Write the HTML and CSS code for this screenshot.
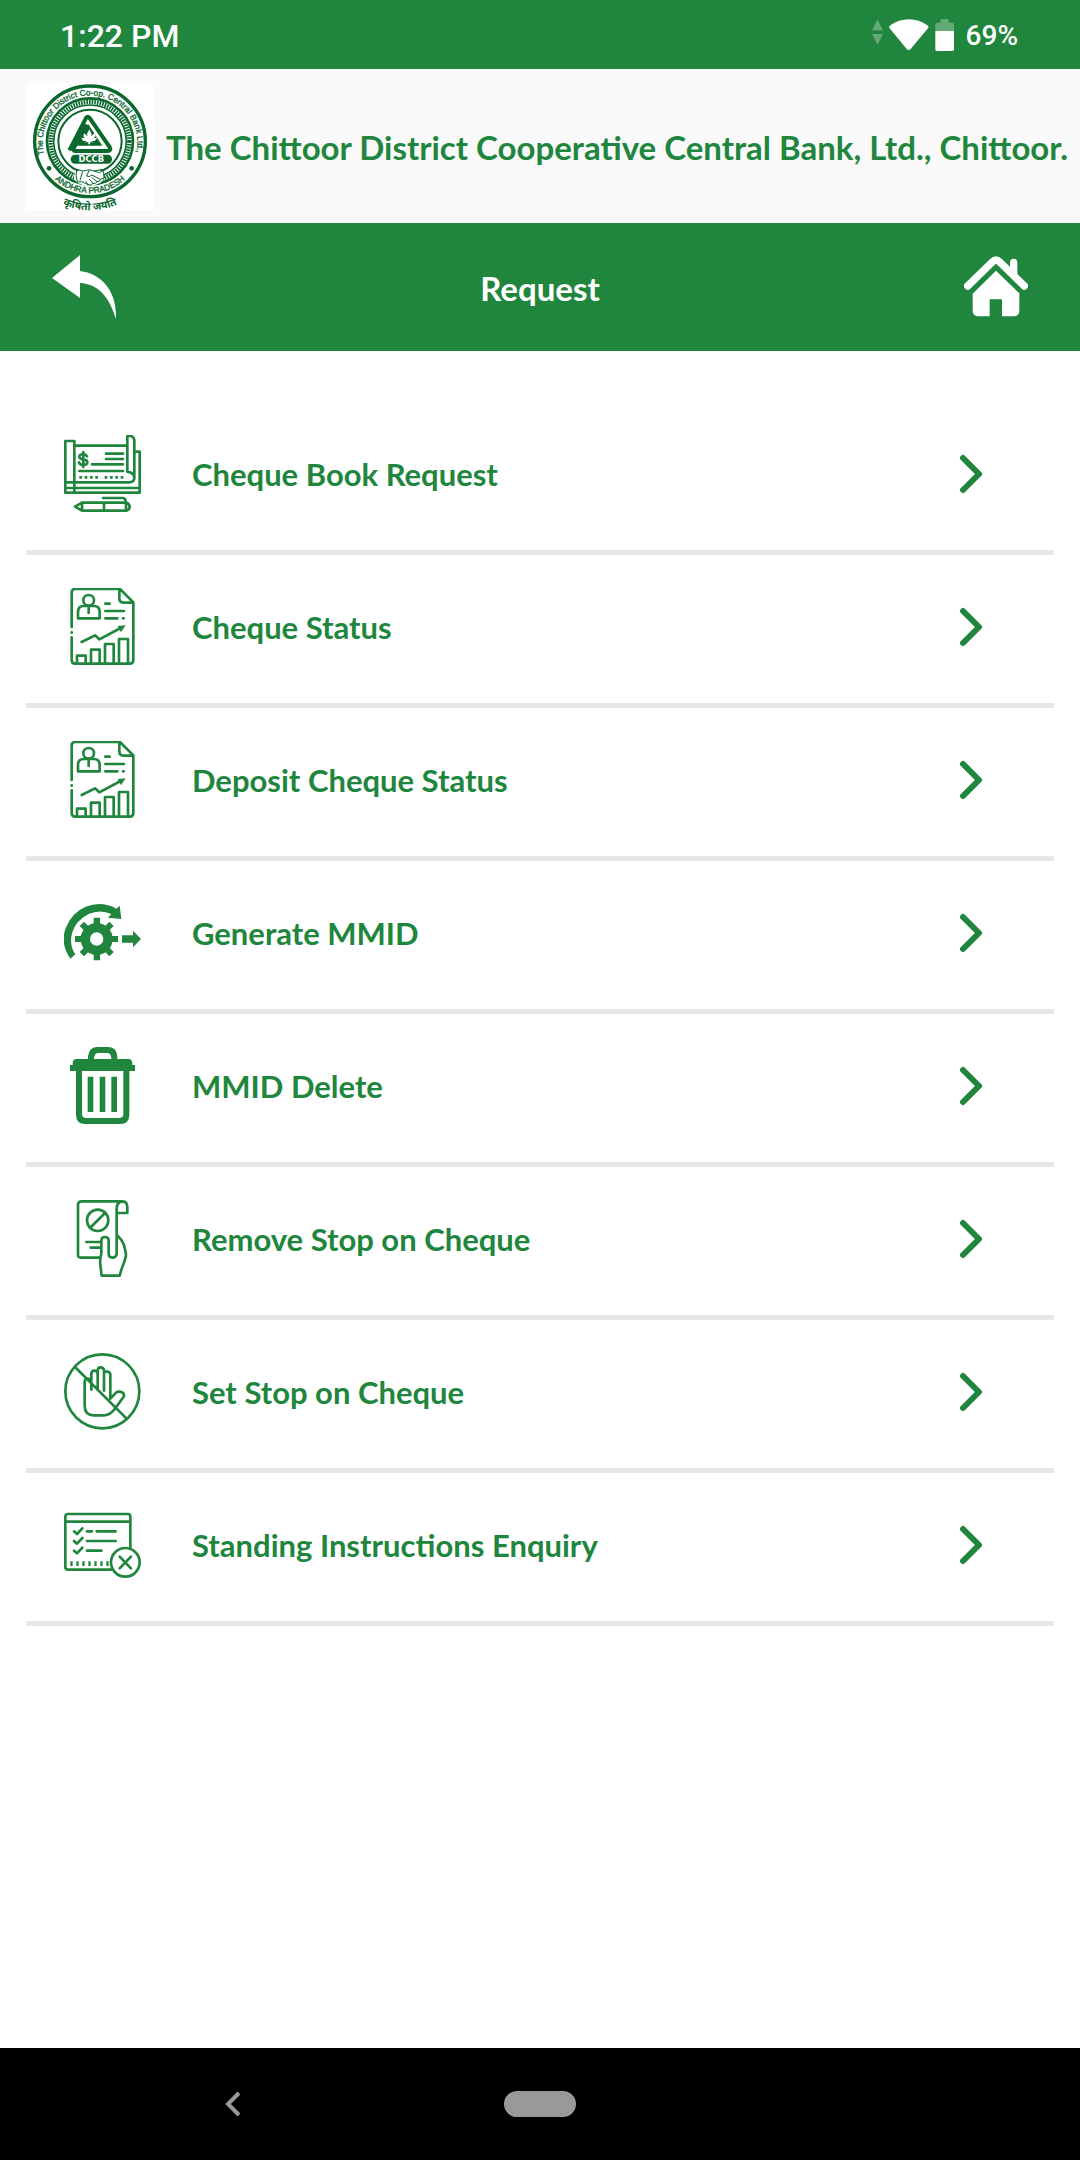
FILE: index.html
```html
<!DOCTYPE html>
<html lang="en">
<head>
<meta charset="utf-8">
<meta name="viewport" content="width=device-width, initial-scale=1">
<title>Request</title>
<link rel="stylesheet" href="styles.css">
</head>
<body>
<div class="status-bar">
  <span class="clock">1:22 PM</span>
  <div class="status-icons">
    <svg class="signal" viewBox="93 54 34 96" aria-hidden="true"><path d="M93 87 110 54 127 87ZM93 99H127L110 132Z"/></svg>
    <svg class="wifi" viewBox="145 54 120 96" aria-hidden="true"><path d="M147 74Q205 36 262 74Q265 78 262 82L210 144Q204 150 198 144L147 82Q144 78 147 74Z"/></svg>
    <svg class="battery" viewBox="285 54 57 96" aria-hidden="true"><path class="faded" d="M286 90V69Q286 65 290 65H301V58Q301 54 305 54H322Q326 54 326 58V65H337Q342 65 342 69V90Z"/><path d="M286 90H342V145Q342 150 337 150H291Q286 150 286 145Z"/></svg>
    <span class="charge">69%</span>
  </div>
</div>

<header class="brand">
  <svg class="logo" viewBox="78 66 381 381" role="img" aria-label="DCCB Andhra Pradesh">
    <defs>
      <path id="arc-top" d="M136 292A142 142 0 1 1 406 286"/>
      <path id="arc-bottom" d="M150 340A156 156 0 0 0 390 340"/>
      <path id="arc-motto" d="M150 409A205 205 0 0 0 390 409"/>
    </defs>
    <rect x="78" y="66" width="381" height="381" fill="#fff"/>
    <g fill="none" stroke="#0b682d">
      <circle cx="270" cy="241" r="166" stroke-width="10"/>
      <circle cx="270" cy="241" r="129" stroke-width="8"/>
      <circle cx="270" cy="241" r="118" stroke-width="13" stroke-dasharray="5 3"/>
      <circle cx="270" cy="241" r="109" stroke-width="5"/>
      <circle cx="270" cy="241" r="95" stroke-width="6"/>
      <path d="M208 268 258 171Q263 164 269 171L329 258Q335 270 322 270H226Q217 270 223 258L260 190" stroke-width="12"/>
    </g>
    <g fill="#0b682d">
      <circle cx="147" cy="322" r="7"/>
      <circle cx="395" cy="322" r="7"/>
      <path d="M265 190 307 254H228Z"/>
      <rect x="212" y="281" width="124" height="27" rx="13"/>
    </g>
    <path fill="#fff" d="M268 205 275 220 273 226 284 217 287 226 281 231 292 230 285 239 273 241 282 244H270V250H265V244H253L262 240 249 239 244 230 255 232 250 226 252 217 263 226 261 218Z"/>
    <ellipse cx="267" cy="348" rx="45" ry="26" fill="#fff"/>
    <g fill="none" stroke="#0b682d" stroke-width="3">
      <path d="M230 325Q226 345 232 363L246 362 264 371Q272 374 279 367 289 369 291 362 300 363 303 354L312 351Q313 334 306 325L282 330 268 326 249 330ZM248 331 240 358M268 327 260 345Q267 350 276 342L302 356M264 371 257 361M279 367 267 354M291 362 276 350M282 330 302 336"/>
    </g>
    <text class="dccb" x="274" y="303" text-anchor="middle">DCCB</text>
    <text class="ring-text"><textPath href="#arc-top" startOffset="50%" text-anchor="middle">The Chittoor District Co-op. Central Bank Ltd.,</textPath></text>
    <text class="ring-text"><textPath href="#arc-bottom" startOffset="50%" text-anchor="middle">ANDHRA PRADESH</textPath></text>
    <text class="motto"><textPath href="#arc-motto" startOffset="50%" text-anchor="middle">कृषितो जयति</textPath></text>
  </svg>
  <h1 class="bank-name">The Chittoor District Cooperative Central Bank, Ltd., Chittoor.</h1>
</header>

<div class="toolbar">
  <button class="tool-button" type="button" aria-label="Back">
    <svg viewBox="0 0 64 64"><path d="M0 23 28 0V16C50 19 65 36 64 64 57 41 46 29 28 28V43Z"/></svg>
  </button>
  <h2 class="page-title">Request</h2>
  <button class="tool-button" type="button" aria-label="Home">
    <svg viewBox="372 767 192 192"><path d="M398 883 468 814 538 882V933Q538 951 520 951H486V900H449V951H416Q398 951 398 933Z"/><path d="M510 806V790Q510 778 521 778T532 790V828Z"/><path class="roof" d="M383 860 458 787Q468 777 478 787L553 860"/></svg>
  </button>
</div>

<main class="content">
  <ul class="menu">
    <li><a class="menu-row" href="#cheque-book">
      <svg class="icon" viewBox="72 75 231 231"><path class="line" d="M76 93H103V248H76ZM103 107H259M286 125H299V248H103M76 217H266Q283 217 283 204 283 188 262 185V78H272Q283 80 283 94V204M76 234H299M198 131H249M198 147H249M156 163H249M118 183H249"/><path class="line dotted" d="M118 202H175M194 202H251"/><path class="line" d="M141 139Q137 132 129 132 118 133 118 140 118 146 129 148 142 149 142 157 141 165 130 165 119 165 117 157M130 126V171M189 264H249Q257 265 258 277M126 278H259Q269 281 269 290T259 302H126L105 290ZM126 278V302M192 278V302M258 278V302"/></svg>
      <span class="label">Cheque Book Request</span>
      <svg class="chevron" viewBox="0 0 24 40" aria-hidden="true"><path d="M4 4 20 20 4 36"/></svg></a></li>
    <li><a class="menu-row" href="#cheque-status">
      <svg class="icon" viewBox="72 54 231 231"><path class="line" d="M95 171V68Q95 57 106 57H240L280 97V270Q280 281 269 281H106Q95 281 95 270V202M95 187V188M238 59V85Q238 98 250 98H279M114 145V126Q114 108 131 108H162Q179 108 179 126V145ZM146 110V129M196 101H209M196 123H252M196 145H232M249 145H251M125 216 165 196 178 208 242 174M111 281V257H137V281M153 281V239H179V281M195 281V222H221V281M237 281V207H264V281"/><circle class="line" cx="146" cy="91" r="16"/><path d="M233 168 257 166 243 187Z"/></svg>
      <span class="label">Cheque Status</span>
      <svg class="chevron" viewBox="0 0 24 40" aria-hidden="true"><path d="M4 4 20 20 4 36"/></svg></a></li>
    <li><a class="menu-row" href="#deposit-status">
      <svg class="icon" viewBox="72 54 231 231"><path class="line" d="M95 171V68Q95 57 106 57H240L280 97V270Q280 281 269 281H106Q95 281 95 270V202M95 187V188M238 59V85Q238 98 250 98H279M114 145V126Q114 108 131 108H162Q179 108 179 126V145ZM146 110V129M196 101H209M196 123H252M196 145H232M249 145H251M125 216 165 196 178 208 242 174M111 281V257H137V281M153 281V239H179V281M195 281V222H221V281M237 281V207H264V281"/><circle class="line" cx="146" cy="91" r="16"/><path d="M233 168 257 166 243 187Z"/></svg>
      <span class="label">Deposit Cheque Status</span>
      <svg class="chevron" viewBox="0 0 24 40" aria-hidden="true"><path d="M4 4 20 20 4 36"/></svg></a></li>
    <li><a class="menu-row" href="#generate-mmid">
      <svg class="icon" viewBox="72 42 231 231"><path d="M91 236Q60 192 77 145 94 98 137 80 186 62 229 86L239 77 244 117 204 113 214 102Q180 87 146 102 109 120 97 157 86 194 106 223ZM246 166H279V152L303 177 279 202V188H246Z"/><circle class="gear" cx="170" cy="177" r="34"/><path d="M161 134V113H180V134ZM161 220V241H180V220ZM127 168H105V186H127ZM213 168H234V186H213ZM134 153 119 138 132 125 147 140ZM206 153 221 138 208 125 193 140ZM134 201 119 216 132 229 147 214ZM206 201 221 216 208 229 193 214Z"/></svg>
      <span class="label">Generate MMID</span>
      <svg class="chevron" viewBox="0 0 24 40" aria-hidden="true"><path d="M4 4 20 20 4 36"/></svg></a></li>
    <li><a class="menu-row" href="#delete-mmid">
      <svg class="icon" viewBox="72 51 231 231"><path fill-rule="evenodd" d="M144 87V79Q147 51 173 51H203Q230 51 232 79V87H265Q277 87 277 101V105H285V123H268V254Q268 282 240 282H136Q108 282 108 254V123H90V105H98V101Q98 87 110 87ZM162 87H214Q214 69 202 69H174Q162 69 162 87ZM126 123V251Q126 264 139 264H237Q250 264 250 251V123Z"/><path d="M143 140H160V246H143ZM179 140H196V246H179ZM214 140H231V246H214Z"/></svg>
      <span class="label">MMID Delete</span>
      <svg class="chevron" viewBox="0 0 24 40" aria-hidden="true"><path d="M4 4 20 20 4 36"/></svg></a></li>
    <li><a class="menu-row" href="#remove-stop">
      <svg class="icon" viewBox="72 60 231 231"><path class="line" d="M182 233H122Q114 232 114 225V75Q114 64 126 64H248Q262 65 262 82V99H232M248 64Q230 66 230 85V223Q228 233 217 233 206 232 206 221V181Q206 171 195 171 184 171 184 182V221Q179 235 181 255L185 287H239L246 263Q258 235 258 222L252 195Q246 179 231 165M139 186H182M152 203H182M150 144 195 99"/><circle class="line" cx="173" cy="121" r="32"/></svg>
      <span class="label">Remove Stop on Cheque</span>
      <svg class="chevron" viewBox="0 0 24 40" aria-hidden="true"><path d="M4 4 20 20 4 36"/></svg></a></li>
    <li><a class="menu-row" href="#set-stop">
      <svg class="icon" viewBox="72 54 231 231"><circle class="line" cx="187" cy="169" r="111"/><path class="line" d="M105 96 259 250M154 164V115Q155 107 163 107T173 115V155M173 160V105Q174 97 182 97T192 105V167M192 112Q194 109 202 110 211 111 211 120V191L229 172Q235 168 244 171 253 174 252 184L226 220Q211 241 193 241H161Q134 240 134 213V141Q134 131 143 131 150 131 154 137"/></svg>
      <span class="label">Set Stop on Cheque</span>
      <svg class="chevron" viewBox="0 0 24 40" aria-hidden="true"><path d="M4 4 20 20 4 36"/></svg></a></li>
    <li><a class="menu-row" href="#standing-instructions">
      <svg class="icon" viewBox="72 48 231 231"><path class="line" d="M214 239H84Q76 239 76 231V80Q76 72 84 72H263Q271 72 271 80V173M76 95H271M141 124H156M170 124H227M141 153H227M141 182H184"/><path class="line" d="M102 124 111 132 127 115M102 153 111 161 127 144M102 182 111 190 127 173M239 200 273 235M273 200 239 235"/><path class="line dashes" d="M91 221H207"/><circle class="line" cx="256" cy="217" r="43"/></svg>
      <span class="label">Standing Instructions Enquiry</span>
      <svg class="chevron" viewBox="0 0 24 40" aria-hidden="true"><path d="M4 4 20 20 4 36"/></svg></a></li>
  </ul>
</main>

<nav class="system-nav" aria-label="System">
  <button class="system-back" type="button" aria-label="System back"><svg viewBox="0 0 16 26"><path d="M14 2 3 13 14 24"/></svg></button>
  <button class="system-home" type="button" aria-label="System home"></button>
</nav>
</body>
</html>
```
FILE: styles.css
```css
* {
  box-sizing: border-box;
}

body {
  display: flex;
  flex-direction: column;
  min-height: 100vh;
  margin: 0;
  background: #fff;
  color: #21863d;
  font-family: Lato, sans-serif;
  font-weight: 700;
}

button {
  padding: 0;
  border: 0;
  background: none;
}

svg {
  display: block;
  flex: none;
}

/* Status bar */
.status-bar {
  display: flex;
  align-items: center;
  justify-content: space-between;
  height: 69px;
  padding: 0 62px 0 60px;
  background: #21863d;
  color: #fff;
  font-family: Roboto, sans-serif;
  font-weight: 500;
}

.clock,
.charge {
  padding-top: 2px;
}

.clock {
  font-size: 32px;
}

.status-icons {
  display: flex;
  align-items: center;
  gap: 6px;
  fill: #fff;
}

.signal {
  width: 11px;
  height: 32px;
  opacity: 0.3;
}

.wifi {
  width: 40px;
  height: 32px;
}

.battery {
  width: 19px;
  height: 32px;
}

.faded {
  opacity: 0.3;
}

.charge {
  margin-left: 6px;
  font-size: 28px;
}

/* Bank header */
.brand {
  display: flex;
  align-items: center;
  gap: 13px;
  height: 154px;
  padding-left: 26px;
  background: #fafafa;
}

.logo {
  width: 127px;
  height: 127px;
  overflow: visible;
}

.logo text {
  fill: #0b682d;
}

.logo .dccb {
  fill: #fff;
  font: 700 25px "DejaVu Sans", sans-serif;
}

.ring-text {
  font: 400 25px "Liberation Sans", sans-serif;
  stroke: #0b682d;
}

.motto {
  font: 700 32px "Noto Sans", sans-serif;
}

.bank-name,
.page-title {
  margin: 0;
  padding-top: 2px;
  font-size: 33px;
  line-height: 40px;
  white-space: nowrap;
}

/* Page toolbar */
.toolbar {
  display: flex;
  align-items: center;
  justify-content: space-between;
  height: 128px;
  padding: 0 52px;
  background: #21863d;
  color: #fff;
}

.tool-button svg {
  width: 64px;
  height: 64px;
  fill: #fff;
}

.roof {
  fill: none;
  stroke: #fff;
  stroke-width: 22;
  stroke-linecap: round;
}

/* Menu */
.content {
  flex: 1;
  padding: 51px 26px;
}

.menu {
  margin: 0;
  padding: 0;
  list-style: none;
}

.menu-row {
  display: flex;
  align-items: center;
  padding: 33px 71px 38px 38px;
  border-bottom: 5px solid #e6e6e6;
  color: inherit;
  font-size: 31px;
  line-height: 40px;
  text-decoration: none;
}

.icon {
  width: 77px;
  height: 77px;
  fill: #21863d;
}

.line {
  fill: none;
  stroke: #21863d;
  stroke-width: 8;
  stroke-linejoin: round;
  stroke-linecap: round;
}

.dotted {
  stroke-linecap: butt;
  stroke-dasharray: 8 8;
}

.dashes {
  stroke-width: 14;
  stroke-linecap: butt;
  stroke-dasharray: 7 11;
}

.gear {
  fill: none;
  stroke: #21863d;
  stroke-width: 28;
}

.label {
  flex: 1;
  margin-left: 51px;
}

.chevron {
  width: 24px;
  height: 40px;
  fill: none;
  stroke: #21863d;
  stroke-width: 6;
  stroke-linecap: round;
  stroke-linejoin: round;
}

/* System navigation */
.system-nav {
  display: grid;
  grid-template-columns: 1fr 72px 1fr;
  align-items: center;
  height: 112px;
  background: #000;
}

.system-back {
  justify-self: center;
  padding-right: 38px;
}

.system-back svg {
  width: 16px;
  height: 26px;
  fill: none;
  stroke: #999;
  stroke-width: 4;
}

.system-home {
  height: 26px;
  border-radius: 13px;
  background: #999;
}
```
